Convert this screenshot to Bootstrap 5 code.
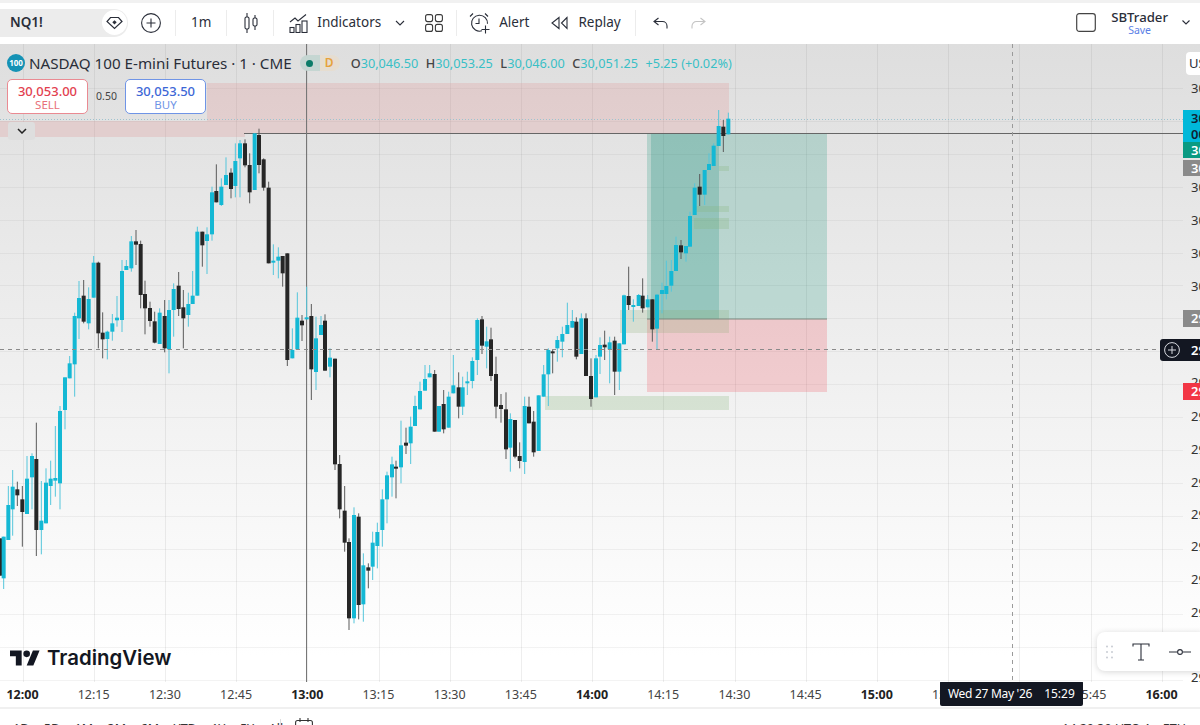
<!DOCTYPE html>
<html lang="en">
<head>
    <meta charset="UTF-8">
    <meta name="viewport" content="width=device-width, initial-scale=1.0">
    <title>NQ1! chart</title>
    <link href="https://cdn.jsdelivr.net/npm/bootstrap@5.3.0/dist/css/bootstrap.min.css" rel="stylesheet">
    <style>
        html, body { height: 725px; overflow: hidden; }
        body { font-family: "Noto Sans", "Open Sans", sans-serif; background: #fff; color: #2a2e39; padding-top: 2px; border-top: 0; }
        .stripe { position: absolute; top: 0; left: 0; right: 0; height: 3px; background: #f1f1f1; }

        /* top toolbar */
        .topbar { height: 39px; margin-top: 1px; margin-bottom: 2px; font-size: 13.5px; }
        .sym-pill { width: 128px; height: 28px; background: #ececec; border-radius: 0 14px 14px 0; padding-left: 10px; font-weight: 600; font-size: 13.5px; }
        .sym-pill .gem { width: 25px; height: 25px; margin-right: 1px; background: #fff; border-radius: 50%; }
        .sep { width: 1px; height: 26px; background: #ececec; }
        .tool { color: #2a2e39; }
        .btn-plus { margin-left: 13px; margin-right: 14px; }
        .w-1m { margin: 0 15px; }
        .w-cand { margin: 0 15px 0 17px; }
        .w-ind { margin-left: 15px; gap: 8px; }
        .w-chev { margin-left: 14px; margin-right: 20px; }
        .w-grid { margin-right: 13px; }
        .w-alert { margin-left: 12px; gap: 8px; }
        .w-replay { margin-left: 22px; gap: 10px; margin-right: 14px; }
        .w-undo { margin-left: 17px; margin-right: 23px; }
        .acct { margin-right: 10px; }
        .acct .who { margin-left: 15px; margin-right: 14px; }
        .acct .name { font-size: 13.2px; font-weight: 500; line-height: 14px; }
        .acct .save { font-size: 10.5px; color: #5b7fe6; line-height: 12px; }

        /* chart canvas */
        .chart { position: relative; height: 638px; background: linear-gradient(#dedede, #ffffff 96%); overflow: hidden; }
        .chart svg.plot { position: absolute; top: 0; left: 0; }
        .legend { position: absolute; top: 8px; left: 7px; font-size: 14px; }
        .legend .badge100 { width: 18px; height: 18px; border-radius: 50%; background: #1592b5; color: #fff; font-size: 8px; font-weight: 700; }
        .legend .title { margin-left: 4px; font-size: 15.2px; color: #2a2e39; }
        .legend .state { margin-left: 8px; height: 16px; width: 40px; border-radius: 8px; background: linear-gradient(90deg, #c5d6d2 50%, #e6ddd0 50%); font-size: 12px; color: #e6a23c; font-weight: 600; }
        .legend .dot { width: 7px; height: 7px; border-radius: 50%; background: #0b7c68; }
        .ohlc { margin-left: 11px; font-size: 12.7px; color: #39bfc6; gap: 7.5px; }
        .ohlc b { font-weight: 500; color: #444; }
        .trade { position: absolute; top: 35px; left: 7px; gap: 8px; }
        .trade .box { width: 81px; height: 35px; background: #fff; border-radius: 5px; border: 1px solid; font-size: 13px; line-height: 14px; font-weight: 500; }
        .trade .box small { font-size: 11.5px; font-weight: 400; line-height: 13px; display: block; }
        .trade .sell { color: #e2404f; border-color: #ea8a92; margin-right: 0; }
        .trade .sell small { color: #e8707a; }
        .trade .buy { color: #3d67d6; border-color: #6f94e6; }
        .trade .buy small { color: #6f94e6; }
        .trade .spread { font-size: 10.5px; color: #444; width: 21px; }
        .collapse-btn { position: absolute; top: 78px; left: 8px; width: 27px; height: 18px; background: #dedede; border-radius: 3px; }

        /* price scale */
        .scale-lbl { position: absolute; left: 1191px; font-size: 13px; line-height: 16px; color: #333; white-space: nowrap; }
        .tag { position: absolute; left: 1183px; width: 17px; padding-left: 8px; overflow: hidden; white-space: nowrap; font-size: 13px; font-weight: 600; color: #fff; line-height: 16px; }
        .usd { position: absolute; top: 8px; left: 1186px; width: 20px; height: 23px; background: #fff; border-radius: 4px 0 0 4px; font-size: 13px; line-height: 23px; padding-left: 3px; white-space: nowrap; overflow: hidden; }
        .cross-btn { position: absolute; left: 1160px; top: 295px; width: 23px; height: 22px; background: #131722; border-radius: 3px 0 0 3px; }

        /* floating drawing toolbar */
        .drawbar { position: absolute; top: 588px; left: 1097px; width: 110px; height: 39px; background: #fff; border-radius: 8px; box-shadow: 0 1px 6px rgba(0,0,0,.16); padding-left: 9px; gap: 16px; }
        .drawbar .t-icon { margin-left: 3px; }
        .drawbar .pin-icon { margin-left: 3px; }
        .tv-logo { position: absolute; top: 602px; left: 10px; gap: 7px; color: #131722; }
        .tv-logo span { font-family: Inter, sans-serif; font-size: 20.4px; font-weight: 600; line-height: 24px; }

        /* time scale */
        .timebar { position: relative; height: 27px; border-bottom: 2px solid #f0f0f0; font-size: 12.5px; color: #444; padding-left: 0; margin-left: -13.1px; width: 1230px; }
        .timebar span { width: 71.2px; flex: none; text-align: center; line-height: 25px; }
        .timebar .major { font-weight: 700; color: #222; }
        .date-tag { position: absolute; top: -1px; left: 953px; width: 143px; height: 25px; background: #131722; color: #fff; border-radius: 2px; font-size: 12px; line-height: 25px; z-index: 2; gap: 12px; }
        .date-tag span { width: auto; }
        .date-tag .day { letter-spacing: -.3px; }

        /* range row, mostly below the fold */
        .rangebar { height: 20px; font-size: 12.5px; color: #333; padding-top: 11px; position: relative; }
        .rangebar .ranges { margin-left: 13px; gap: 14.5px; }
        .rangebar .clock { position: absolute; right: 14px; top: 11px; }
        .rangebar .vsep { position: absolute; left: 280px; top: 10px; width: 1px; height: 10px; background: #ddd; }
        .rangebar svg { position: absolute; left: 295px; top: 9px; }
    </style>
</head>
<body>
    <div class="stripe"></div>

    <!-- Top toolbar -->
    <div class="topbar d-flex align-items-center bg-white position-relative">
        <div class="sym-pill d-flex align-items-center justify-content-between">
            <span>NQ1!</span>
            <span class="gem d-flex align-items-center justify-content-center">
                <svg width="17" height="14" viewBox="0 0 17 14" fill="none" stroke="#2a2e39" stroke-width="1.2"><path d="M4.5 1.5h8l3.5 4-7.5 7-7.5-7z"/><path d="M8.5 4.2l2.2 2.1-2.2 2.1-2.2-2.1z" fill="#2a2e39" stroke="none"/></svg>
            </span>
        </div>
        <svg class="btn-plus" width="20" height="20" viewBox="0 0 20 20" fill="none" stroke="#2a2e39" stroke-width="1.1"><circle cx="10" cy="10" r="9.4"/><path d="M10 5.5v9M5.5 10h9"/></svg>
        <div class="sep"></div>
        <span class="w-1m tool">1m</span>
        <div class="sep"></div>
        <svg class="w-cand" width="14" height="22" viewBox="0 0 14 22" fill="none" stroke="#2a2e39" stroke-width="1.1"><rect x="1" y="5" width="4" height="12" rx="1.5"/><path d="M3 1v4M3 17v4"/><rect x="9" y="6" width="4" height="8" rx="1.5"/><path d="M11 3v3M11 14v4"/></svg>
        <div class="sep"></div>
        <div class="w-ind d-flex align-items-center tool">
            <svg width="20" height="20" viewBox="0 0 20 20" fill="none" stroke="#2a2e39" stroke-width="1.1"><path d="M1 9l5-4 3 3 8-6.5"/><rect x="1" y="14.5" width="4" height="5"/><rect x="7" y="11.5" width="4" height="8"/><rect x="13" y="8" width="5" height="11.5"/></svg>
            <span>Indicators</span>
        </div>
        <svg class="w-chev" width="10" height="6" viewBox="0 0 10 6" fill="none" stroke="#2a2e39" stroke-width="1.1"><path d="M1 1l4 4 4-4"/></svg>
        <svg class="w-grid" width="18" height="18" viewBox="0 0 18 18" fill="none" stroke="#3a3a3a" stroke-width="1.1"><rect x=".6" y=".6" width="7" height="7" rx="2"/><rect x="10.4" y=".6" width="7" height="7" rx="2"/><rect x=".6" y="10.4" width="7" height="7" rx="2"/><rect x="10.4" y="10.4" width="7" height="7" rx="2"/></svg>
        <div class="sep"></div>
        <div class="w-alert d-flex align-items-center tool">
            <svg width="22" height="22" viewBox="0 0 22 22" fill="none" stroke="#2a2e39" stroke-width="1.1"><path d="M13 18.8a8 8 0 1 1 5.5-7"/><path d="M10 6.5v5H6.5"/><path d="M1 4.5L4 1.5M16 1.5l3 3"/><path d="M16.5 13.5v8M12.5 17.5h8"/></svg>
            <span>Alert</span>
        </div>
        <div class="w-replay d-flex align-items-center tool">
            <svg width="17" height="14" viewBox="0 0 17 14" fill="none" stroke="#2a2e39" stroke-width="1.1"><path d="M8 1.5L1 7l7 5.5zM16 1.5L10.5 7l5.5 5.5z"/></svg>
            <span>Replay</span>
        </div>
        <div class="sep"></div>
        <svg class="w-undo" width="15" height="12" viewBox="0 0 15 12" fill="none" stroke="#2a2e39" stroke-width="1.1"><path d="M5.5 1L1 4.5 5.5 8M1 4.5h8.5a4.5 4.5 0 0 1 4.5 4.5v2.5"/></svg>
        <svg width="15" height="12" viewBox="0 0 15 12" fill="none" stroke="#c4c4c4" stroke-width="1.1"><path d="M9.5 1L14 4.5 9.5 8M14 4.5H5.5A4.5 4.5 0 0 0 1 9v2.5"/></svg>
        <div class="ms-auto d-flex align-items-center acct">
            <svg width="20" height="19" viewBox="0 0 20 19" fill="none" stroke="#444" stroke-width="1.2"><rect x=".7" y=".7" width="18.6" height="17.6" rx="2.5"/></svg>
            <div class="text-center who">
                <div class="name">SBTrader</div>
                <div class="save">Save</div>
            </div>
            <svg width="8" height="5" viewBox="0 0 8 5" fill="none" stroke="#2a2e39" stroke-width="1.1"><path d="M.5.5L4 4 7.5.5"/></svg>
        </div>
    </div>

    <!-- Chart canvas -->
    <div class="chart" id="chart">
        <svg class="plot" id="plot" width="1200" height="638" viewBox="0 44 1200 638"></svg>

        <div class="legend d-flex align-items-center">
            <span class="badge100 d-flex align-items-center justify-content-center">100</span>
            <span class="title">NASDAQ 100 E-mini Futures · 1 · CME</span>
            <span class="state d-flex align-items-center justify-content-around"><span class="dot"></span><span>D</span></span>
            <div class="ohlc d-flex">
                <span><b>O</b>30,046.50</span>
                <span><b>H</b>30,053.25</span>
                <span><b>L</b>30,046.00</span>
                <span><b>C</b>30,051.25</span>
                <span>+5.25 (+0.02%)</span>
            </div>
        </div>

        <div class="trade d-flex align-items-center">
            <div class="box sell text-center pt-1">30,053.00<small>SELL</small></div>
            <span class="spread text-center">0.50</span>
            <div class="box buy text-center pt-1">30,053.50<small>BUY</small></div>
        </div>
        <div class="collapse-btn d-flex align-items-center justify-content-center">
            <svg width="10" height="6" viewBox="0 0 10 6" fill="none" stroke="#222" stroke-width="1.5"><path d="M1 1l4 4 4-4"/></svg>
        </div>

        <div class="usd">USD</div>
        <div id="scale"></div>
        <div class="tag" style="top:66px;height:32px;background:#00b8d9;color:#123">30,051<br>00:31</div>
        <div class="tag" style="top:98px;height:16px;background:#0a9a82">30,046</div>
        <div class="tag" style="top:116px;height:16px;background:#8a8a8a">30,040</div>
        <div class="tag" style="top:266px;height:17px;background:#8a8a8a">29,990</div>
        <div class="cross-btn d-flex align-items-center justify-content-center">
            <svg width="16" height="16" viewBox="0 0 16 16" fill="none" stroke="#d8dae0" stroke-width="1"><circle cx="8" cy="8" r="7.4"/><path d="M8 4v8M4 8h8"/></svg>
        </div>
        <div class="tag" style="top:295px;height:22px;line-height:22px;background:#131722">29,981</div>
        <div class="tag" style="top:339px;height:17px;background:#f23645">29,970</div>

        <div class="tv-logo d-flex align-items-center">
            <svg width="30" height="16" viewBox="0 4 36 18" fill="#131722"><path d="M14 22H7V11H0V4h14v18zM28 22h-8l7.5-18h8L28 22z"/><circle cx="20" cy="8" r="4"/></svg>
            <span>TradingView</span>
        </div>

        <div class="drawbar d-flex align-items-center">
            <svg width="7" height="14" viewBox="0 0 7 14" fill="#c9ccd3"><circle cx="1" cy="1.5" r="1"/><circle cx="6" cy="1.5" r="1"/><circle cx="1" cy="7" r="1"/><circle cx="6" cy="7" r="1"/><circle cx="1" cy="12.5" r="1"/><circle cx="6" cy="12.5" r="1"/></svg>
            <svg class="t-icon" width="18" height="18" viewBox="0 0 18 18" fill="none" stroke="#2a2e39" stroke-width="1.1"><path d="M1 3.5V1h16v2.5M9 1v16M6 17h6"/></svg>
            <svg class="pin-icon" width="22" height="6" viewBox="0 0 22 6" fill="none" stroke="#2a2e39" stroke-width="1.1"><path d="M0 3h8M14 3h8"/><circle cx="11" cy="3" r="2.4"/></svg>
        </div>
    </div>

    <!-- Time scale -->
    <div class="position-relative overflow-hidden">
        <div class="timebar d-flex">
            <span class="major">12:00</span><span>12:15</span><span>12:30</span><span>12:45</span>
            <span class="major">13:00</span><span>13:15</span><span>13:30</span><span>13:45</span>
            <span class="major">14:00</span><span>14:15</span><span>14:30</span><span>14:45</span>
            <span class="major">15:00</span><span>15:15</span><span>15:30</span><span>15:45</span>
            <span class="major">16:00</span>
            <div class="date-tag d-flex align-items-center justify-content-center"><span class="day">Wed 27 May '26</span><span>15:29</span></div>
        </div>
    </div>

    <!-- Range row -->
    <div class="rangebar">
        <div class="ranges d-flex"><span>1D</span><span>5D</span><span>1M</span><span>3M</span><span>6M</span><span>YTD</span><span>1Y</span><span>5Y</span><span>All</span></div>
        <div class="vsep"></div>
        <svg width="18" height="16" viewBox="0 0 18 16" fill="none" stroke="#333" stroke-width="1.1"><rect x=".6" y="2.5" width="16.8" height="13" rx="2"/><path d="M5 0v4M13 0v4"/></svg>
        <div class="clock">14:29:30 UTC-4 &nbsp;&nbsp; ETH</div>
    </div>

    <script src="https://cdn.jsdelivr.net/npm/bootstrap@5.3.0/dist/js/bootstrap.bundle.min.js"></script>
    <script>
        // Candles traced off 3x crops: [x, up?, wickTop, bodyTop, bodyBottom, wickBottom]
        // Each block keeps the crop's own coordinates, origin given first.
        const blocks = [
            { ox: 0, oy: 370, rows: [
                [0,0,505,505,617,617],[11,1,500,500,625,657],[25,1,348,405,510,510],[38,1,300,350,418,497],
                [52,0,335,358,376,408],[67,0,348,388,426,530],[81,1,258,326,432,432],[96,1,250,258,322,418],
                [109,0,158,267,480,558],[124,1,333,452,480,553],[138,1,295,338,460,460],[152,1,272,326,348,405],
                [166,1,168,324,332,380],[180,1,108,123,340,418],[195,1,22,22,120,178]
            ]},
            { ox: 0, oy: 120, rows: [
                [209,1,708,730,775,775],[224,1,578,588,733,830],[237,1,483,534,595,657],[251,0,480,527,605,610],
                [266,1,502,537,610,628],[281,1,408,428,533,533],[295,0,425,428,640,685],[308,0,577,638,658,715],
                [322,1,632,635,657,718],[337,1,582,610,635,662],[351,1,528,593,601,620],[366,1,420,453,600,636],
                [379,1,420,438,450,450],[394,1,348,364,445,455],[408,0,330,364,374,435],[422,0,362,372,525,565],
                [435,0,482,522,565,643],[450,0,545,564,603,620],[464,0,575,604,668,670],[479,1,565,578,672,672],
                [494,0,540,588,685,697],[507,1,540,570,688,760],[521,1,490,507,570,650],[536,0,456,497,567,588],
                [550,0,510,562,595,685],[565,1,518,552,585,620],[578,1,453,527,552,552],[592,1,320,335,527,527],
                [607,0,335,335,376,440],[621,1,322,343,363,462],[636,1,200,217,343,362],[649,0,133,213,247,247],
                [664,1,175,200,255,258],[678,1,112,165,195,195],[693,0,145,158,207,235],[706,1,70,123,198,232],
                [720,1,60,70,115,232],[735,0,58,70,136,142],[749,0,100,135,217,250],[764,1,40,40,210,210],
                [777,0,26,45,135,160],[791,0,115,118,203,212],[806,0,185,203,430,430],[820,1,373,422,428,465],
                [835,1,382,410,422,475],[848,0,408,408,460,500]
            ]},
            { ox: 280, oy: 280, rows: [
                [22,0,-80,-80,240,258],[37,1,145,210,235,235],[52,1,37,113,208,208],[66,0,105,122,136,183],
                [80,1,20,112,118,118],[94,0,72,108,268,360],[108,1,110,175,276,330],[123,1,108,135,165,165],
                [135,0,103,122,272,272],[150,1,205,233,260,292],[165,0,236,236,553,570],[179,0,525,552,688,715],
                [194,0,618,692,788,815],[207,0,775,786,1015,1050],[222,1,682,705,1015,1030],[236,0,700,710,975,1018],
                [250,1,820,856,973,1025],[265,0,850,862,872,925],[278,1,755,788,860,900],[292,1,728,756,798,865],
                [307,1,628,658,750,800],[321,1,575,586,658,730],[336,1,530,553,592,650],[348,0,542,560,565,655],
                [363,1,422,496,562,610],[378,0,443,488,497,522],[392,1,410,440,490,552],[405,1,347,378,438,438],
                [420,1,305,333,388,388],[435,1,255,297,332,332],[449,1,255,280,292,292],[464,0,270,282,455,455],
                [477,1,378,378,455,455],[491,0,330,372,448,460],[506,1,335,350,443,443],[520,1,225,316,340,340],
                [536,0,277,322,380,415],[548,1,290,322,380,405],[562,1,275,304,310,345],[577,1,232,243,303,325],
                [592,1,115,120,240,285],[606,0,108,118,197,222],[620,1,140,184,200,265],[633,0,143,178,288,303],
                [648,0,230,282,380,415],[663,0,342,375,387,428],[678,0,337,388,508,537],[691,1,400,417,503,575],
                [705,0,420,420,530,535],[719,0,487,528,543,565],[734,1,350,378,546,582],[747,0,350,380,430,430],
                [761,0,393,425,517,530],[776,1,346,346,513,513],[791,1,255,283,350,350],[805,1,205,210,283,378],
                [818,0,208,214,220,280],[832,1,168,180,205,245],[847,1,140,162,185,232],[862,1,68,135,162,162],
                [877,1,90,123,143,143],[889,0,112,125,230,238],[904,1,100,115,222,222],[918,0,100,115,288,288],
                [933,0,235,288,357,380],[948,1,225,235,352,352]
            ]},
            { ox: 560, oy: 90, rows: [
                [120,1,742,765,800,852],[134,0,722,764,772,810],[149,1,740,757,778,880],[164,0,740,752,845,915],
                [178,1,760,760,845,900],[192,1,614,616,763,763],[206,0,530,618,645,660],[220,1,628,645,650,695],
                [236,1,612,615,648,648],[248,0,565,617,655,668],[263,1,615,628,652,652],[277,0,628,628,718,755],
                [291,1,612,614,716,780],[306,1,578,600,612,670],[319,1,512,588,612,628],[334,1,510,543,587,605],
                [348,1,440,465,543,543],[363,0,450,466,487,507],[378,1,468,468,490,515],[390,1,365,378,470,470],
                [404,1,280,293,375,375],[419,0,252,290,314,348],[434,1,240,240,314,345],[447,1,190,222,240,240],
                [461,1,160,167,228,228],[476,1,60,108,168,168],[490,0,90,110,138,186],[505,1,68,86,133,133]
            ]}
        ];

        const NS = "http://www.w3.org/2000/svg";
        const plot = document.getElementById("plot");

        function rect(x, y, w, h, fill) {
            const r = document.createElementNS(NS, "rect");
            r.setAttribute("x", x); r.setAttribute("y", y);
            r.setAttribute("width", w); r.setAttribute("height", h);
            r.setAttribute("fill", fill);
            plot.appendChild(r);
        }

        function line(x1, y1, x2, y2, stroke, dash) {
            const l = document.createElementNS(NS, "line");
            l.setAttribute("x1", x1); l.setAttribute("y1", y1);
            l.setAttribute("x2", x2); l.setAttribute("y2", y2);
            l.setAttribute("stroke", stroke);
            if (dash) l.setAttribute("stroke-dasharray", dash);
            plot.appendChild(l);
        }

        // grid
        for (let i = 0; i < 17; i++) {
            const x = Math.round(22.5 + 71.2 * i) + 0.5;
            line(x, 44, x, 682, "rgba(120,120,120,.13)");
        }
        for (let y = 88; y < 682; y += 32.9) {
            line(0, Math.round(y) + 0.5, 1183, Math.round(y) + 0.5, "rgba(120,120,120,.09)");
        }

        // supply zones
        rect(207, 83, 522, 50, "rgba(224,150,150,.27)");
        rect(0, 121, 207, 16, "rgba(224,150,150,.27)");
        rect(207, 133, 38, 4, "rgba(224,150,150,.27)");

        // long position
        rect(647, 134, 180, 185, "rgba(0,140,110,.2)");
        rect(651, 134, 68, 185, "rgba(0,130,110,.2)");
        rect(647, 319, 180, 73, "rgba(242,54,69,.2)");
        rect(620, 310, 109, 23, "rgba(130,170,110,.22)");

        // demand zones
        rect(545, 396, 184, 14, "rgba(130,180,120,.25)");
        rect(694, 206, 35, 6, "rgba(130,180,120,.25)");
        rect(694, 218, 35, 11, "rgba(130,180,120,.25)");
        rect(719, 166, 10, 5, "rgba(130,180,120,.25)");

        line(0, 119.5, 1183, 119.5, "#9fc3cf", "1 2");
        line(244, 133.5, 1183, 133.5, "#666");
        line(647, 319, 827, 319, "#7d8a80");
        line(306.5, 44, 306.5, 682, "#777");

        // candles
        blocks.forEach(function(b) {
            b.rows.forEach(function(c) {
                const x = b.ox + c[0] / 3;
                const up = c[1] === 1;
                rect(x - 0.5, b.oy + c[2] / 3, 1, (c[5] - c[2]) / 3, up ? "#55c6dc" : "#5a5a5a");
                rect(x - 2, b.oy + c[3] / 3, 4, Math.max((c[4] - c[3]) / 3, 2), up ? "#14b8d4" : "#262626");
            });
        });

        // crosshair
        line(0, 349.5, 1160, 349.5, "#8a8a8a", "4 4");
        line(1012.5, 44, 1012.5, 682, "#9a9a9a", "4 4");

        // price scale labels, y in page coordinates
        const scale = document.getElementById("scale");
        const labels = [[88,"30,070.00"],[187,"30,030.00"],[220,"30,020.00"],[253,"30,010.00"],[286,"30,000.00"],
            [382,"29,970.00"],[416,"29,960.00"],[449,"29,950.00"],[482,"29,940.00"],[514,"29,930.00"],
            [546,"29,920.00"],[579,"29,910.00"],[612,"29,900.00"],[677,"29,880.00"]];
        labels.forEach(function(l) {
            const d = document.createElement("div");
            d.className = "scale-lbl";
            d.style.top = (l[0] - 44 - 8) + "px";
            d.textContent = l[1];
            scale.appendChild(d);
        });
    </script>
</body>
</html>
